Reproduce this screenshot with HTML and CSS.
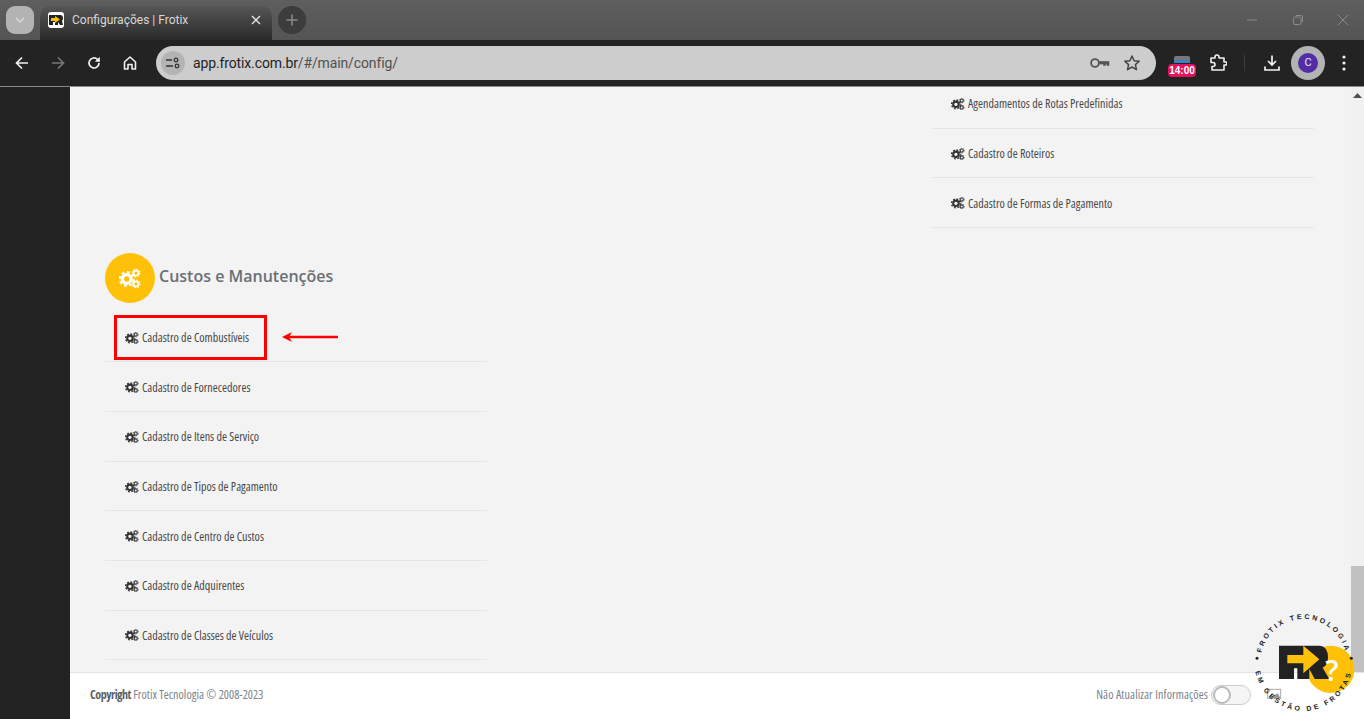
FILE: index.html
```html
<!DOCTYPE html>
<html lang="pt-BR">
<head>
<meta charset="utf-8">
<title>Configurações | Frotix</title>
<link rel="stylesheet" href="styles.css">
</head>
<body>
<svg class="defs" width="0" height="0" aria-hidden="true">
  <defs>
    <g id="cogs">
      <circle cx="5.6" cy="7.4" r="3.2" fill="none" stroke="currentColor" stroke-width="2.4"/>
      <circle cx="5.6" cy="7.4" r="5.1" fill="none" stroke="currentColor" stroke-width="1.6" stroke-dasharray="2.1 1.9"/>
      <circle cx="12.4" cy="3" r="1.8" fill="none" stroke="currentColor" stroke-width="1.2"/>
      <circle cx="12.4" cy="3" r="2.8" fill="none" stroke="currentColor" stroke-width="1" stroke-dasharray="1.1 1.1"/>
      <circle cx="12.4" cy="11" r="1.8" fill="none" stroke="currentColor" stroke-width="1.2"/>
      <circle cx="12.4" cy="11" r="2.8" fill="none" stroke="currentColor" stroke-width="1" stroke-dasharray="1.1 1.1"/>
    </g>
  </defs>
</svg>
<div class="browser">
  <div class="tabstrip">
    <div class="tab-search"><svg width="10" height="6" viewBox="0 0 10 6"><path d="M1 1l4 4 4-4" fill="none" stroke="#dcdcdc" stroke-width="1.4"/></svg></div>
    <div class="tab">
      <span class="favicon"><svg width="14" height="10" viewBox="0 0 14 10"><path d="M0 0h11q3 0 3 3 0 2-1 2.500L14 10h-3L9 7v3H6V7H4v3H0z" fill="#222"/><path d="M2 3h4V1l5 3.500L6 8V6H2z" fill="#ffc107"/></svg></span>
      <span class="tab-title">Configurações | Frotix</span>
      <svg class="tab-close" width="10" height="10" viewBox="0 0 10 10"><path d="M1 1l8 8M9 1l-8 8" stroke="#e4e4e4" stroke-width="1.400"/></svg>
    </div>
    <div class="new-tab"><svg width="12" height="12" viewBox="0 0 12 12"><path d="M6 0.500v11M0.500 6h11" stroke="#8a8a8a" stroke-width="1.500"/></svg></div>
    <div class="window-controls">
      <svg width="12" height="12" viewBox="0 0 12 12"><path d="M1 6h10" stroke="#8b8b8b" stroke-width="1"/></svg>
      <svg width="12" height="12" viewBox="0 0 12 12"><rect x="1.500" y="3" width="7.500" height="7.500" rx="1.500" fill="none" stroke="#8b8b8b"/><path d="M4 1.500h5a1.500 1.500 0 0 1 1.500 1.500v5" fill="none" stroke="#8b8b8b"/></svg>
      <svg width="12" height="12" viewBox="0 0 12 12"><path d="M1 1l10 10M11 1L1 11" stroke="#8b8b8b" stroke-width="1"/></svg>
    </div>
  </div>
  <div class="toolbar">
    <svg class="tb-icon" width="16" height="16" viewBox="0 0 16 16"><path d="M14 8H2.500M8 2.500L2.500 8 8 13.500" fill="none" stroke="#f1f1f1" stroke-width="1.700"/></svg>
    <svg class="tb-icon" width="16" height="16" viewBox="0 0 16 16"><path d="M2 8h11.500M8 2.500L13.500 8 8 13.500" fill="none" stroke="#777" stroke-width="1.700"/></svg>
    <svg class="tb-icon" width="16" height="16" viewBox="0 0 16 16"><path d="M13 8a5 5 0 1 1-1.600-3.700L13.500 6.300" fill="none" stroke="#f1f1f1" stroke-width="1.700"/><path d="M13.800 1.800v5h-5z" fill="#f1f1f1"/></svg>
    <svg class="tb-icon" width="16" height="16" viewBox="0 0 16 16"><path d="M2.500 7L8 2l5.500 5v7h-3.500v-4.500h-4V14H2.500z" fill="none" stroke="#f1f1f1" stroke-width="1.600" stroke-linejoin="round"/></svg>
    <div class="omnibox">
      <span class="site-chip"><svg width="14" height="12" viewBox="0 0 14 12"><path d="M0 3h6M0 9h7" stroke="#333" stroke-width="1.400" fill="none"/><circle cx="10" cy="3" r="1.800" fill="none" stroke="#333" stroke-width="1.300"/><circle cx="11" cy="9" r="1.800" fill="none" stroke="#333" stroke-width="1.300"/></svg></span>
      <span class="url"><span class="url-host">app.frotix.com.br</span>/#/main/config/</span>
      <span class="omni-right">
        <svg width="20" height="12" viewBox="0 0 20 12"><circle cx="5" cy="6" r="3.900" fill="none" stroke="#555" stroke-width="1.800"/><path d="M9 4.500h10v4h-2V7h-1.500v1.500h-2V7H9z" fill="#555" stroke="#555" stroke-width="0.600"/></svg>
        <svg width="18" height="18" viewBox="0 0 18 18"><path d="M9 2l2.100 4.700 5.100 .5-3.800 3.400 1.100 5L9 13l-4.500 2.600 1.100-5L1.800 7.200l5.100-.5z" fill="none" stroke="#444" stroke-width="1.500" stroke-linejoin="round"/></svg>
      </span>
    </div>
    <div class="ext-timer">
      <span class="timer-top"></span>
      <span class="timer-badge">14:00</span>
    </div>
    <svg class="ext-puzzle" width="18" height="18" viewBox="0 0 18 18"><path d="M2 4h4V3a2 2 0 0 1 4 0v1h5v4h1.500a1.500 1.500 0 0 1 0 3H15v5H3v-3.500h1a2 2 0 0 0 0-4H2z" fill="none" stroke="#f1f1f1" stroke-width="1.600" stroke-linejoin="round"/></svg>
    <span class="tb-sep"></span>
    <svg class="ext-download" width="18" height="18" viewBox="0 0 18 18"><path d="M9 1.500v9M5 7l4 4 4-4M2 12.500V16h14v-3.500" fill="none" stroke="#f1f1f1" stroke-width="1.700"/></svg>
    <span class="avatar-ring"><span class="avatar">C</span></span>
    <svg class="menu-dots" width="4" height="16" viewBox="0 0 4 16"><circle cx="2" cy="2" r="1.600" fill="#f1f1f1"/><circle cx="2" cy="8" r="1.600" fill="#f1f1f1"/><circle cx="2" cy="14" r="1.600" fill="#f1f1f1"/></svg>
  </div>
</div>

<div class="viewport">
  <aside class="sidebar"></aside>
  <div class="page">
    <main class="content">
      <section class="col col-left">
        <h2 class="section-title">
          <span class="section-badge"><svg width="22" height="19" viewBox="0 0 16 14"><use href="#cogs"/></svg></span>
          <span class="section-name">Custos e Manutenções</span>
        </h2>
        <ul class="menu">
          <li class="menu-item"><svg class="cog" width="14" height="12" viewBox="0 0 16 14"><use href="#cogs"/></svg>Cadastro de Combustíveis</li>
          <li class="menu-item"><svg class="cog" width="14" height="12" viewBox="0 0 16 14"><use href="#cogs"/></svg>Cadastro de Fornecedores</li>
          <li class="menu-item"><svg class="cog" width="14" height="12" viewBox="0 0 16 14"><use href="#cogs"/></svg>Cadastro de Itens de Serviço</li>
          <li class="menu-item"><svg class="cog" width="14" height="12" viewBox="0 0 16 14"><use href="#cogs"/></svg>Cadastro de Tipos de Pagamento</li>
          <li class="menu-item"><svg class="cog" width="14" height="12" viewBox="0 0 16 14"><use href="#cogs"/></svg>Cadastro de Centro de Custos</li>
          <li class="menu-item"><svg class="cog" width="14" height="12" viewBox="0 0 16 14"><use href="#cogs"/></svg>Cadastro de Adquirentes</li>
          <li class="menu-item"><svg class="cog" width="14" height="12" viewBox="0 0 16 14"><use href="#cogs"/></svg>Cadastro de Classes de Veículos</li>
        </ul>
      </section>
      <section class="col"></section>
      <section class="col col-right">
        <ul class="menu">
          <li class="menu-item"><svg class="cog" width="14" height="12" viewBox="0 0 16 14"><use href="#cogs"/></svg>Agendamentos de Rotas Predefinidas</li>
          <li class="menu-item"><svg class="cog" width="14" height="12" viewBox="0 0 16 14"><use href="#cogs"/></svg>Cadastro de Roteiros</li>
          <li class="menu-item"><svg class="cog" width="14" height="12" viewBox="0 0 16 14"><use href="#cogs"/></svg>Cadastro de Formas de Pagamento</li>
        </ul>
      </section>
    </main>
    <footer class="footer">
      <span class="copyright"><b>Copyright</b> Frotix Tecnologia © 2008-2023</span>
      <span class="footer-right">
        <span class="toggle-label">Não Atualizar Informações</span>
        <span class="toggle"><span class="toggle-knob"></span></span>
      </span>
    </footer>
  </div>
  <div class="scrollbar">
    <svg width="9" height="5" viewBox="0 0 9 5"><path d="M0 5l4.500-5L9 5z" fill="#505050"/></svg>
    <span class="scroll-thumb"></span>
    <span class="scroll-foot"></span>
  </div>

  <div class="highlight-box"></div>
  <svg class="arrow" width="58" height="12" viewBox="0 0 58 12"><path d="M6 6h51" stroke="#f00" stroke-width="2.400"/><path d="M1 6l10-5-3 5 3 5z" fill="#f00"/></svg>
  <svg class="seal" width="120" height="119" viewBox="0 0 360 357">
    <defs>
      <path id="ring-top" d="M49.500 186A129 129 0 0 1 307.500 186"/>
      <path id="ring-bottom" d="M31.500 186A147 147 0 0 0 325.500 186"/>
    </defs>
    <rect x="71" y="268" width="39" height="27" fill="#fff" stroke="#aaa" stroke-width="3"/>
    <path d="M72 294l30-14 7 14z" fill="#999"/>
    <circle cx="260" cy="208" r="71" fill="#ffc107"/>
    <path d="M105 137H228Q252 140 252 172Q252 196 236 203L256 237H212L196 207V237H160V205H150V237H105Z" fill="#222"/>
    <path d="M130 165H178V137L226 178L178 220V190H130Z" fill="#ffc107"/>
    <text class="seal-q" x="244" y="244">?</text>
    <circle cx="39" cy="175" r="4.500" fill="#222"/>
    <circle cx="322" cy="175" r="4.500" fill="#222"/>
    <text class="seal-text"><textPath href="#ring-top" startOffset="50%">FROTIX TECNOLOGIA</textPath></text>
    <text class="seal-text seal-text-low"><textPath href="#ring-bottom" startOffset="50%">EM GESTÃO DE FROTAS</textPath></text>
  </svg>
</div>
</body>
</html>
```

FILE: styles.css
```css
* { box-sizing: border-box; }
html, body { margin: 0; height: 100%; overflow: hidden; }
body { width: 1364px; height: 719px; display: flex; flex-direction: column; font-family: "Open Sans", sans-serif; background: #f3f3f3; }
.defs { position: absolute; }

.browser { flex: none; }
.tabstrip { height: 40px; display: flex; align-items: flex-start; background: linear-gradient(#5e5e5e, #545454); padding: 6px 0 0 6px; }
.tab-search { width: 28px; height: 28px; border-radius: 9px; background: #b3b3b3; display: flex; align-items: center; justify-content: center; }
.tab { width: 232px; height: 34px; margin-left: 6px; border-radius: 10px 10px 0 0; background: linear-gradient(#565656, #2a2a2a); display: flex; align-items: center; padding: 0 11px 6px 8px; }
.favicon { width: 16px; height: 16px; border-radius: 3px; background: #fff; display: flex; align-items: center; justify-content: center; }
.tab-title { margin-left: 8px; flex: 1; font: 12px "Roboto", sans-serif; color: #d8d8d8; }
.new-tab { width: 28px; height: 28px; margin-left: 6px; border-radius: 50%; background: #3c3c3c; display: flex; align-items: center; justify-content: center; }
.window-controls { margin-left: auto; margin-top: 8px; width: 118px; padding-right: 15px; display: flex; justify-content: space-between; }

.toolbar { height: 47px; background: #232323; display: flex; align-items: center; padding-left: 14px; border-bottom: 1px solid #8a8a8a; }
.tb-icon { margin-right: 20px; flex: none; }
.tb-icon:nth-child(4) { margin-right: 18px; }
.omnibox { width: 1000px; height: 34px; flex: none; border-radius: 17px; background: #cdcdcd; display: flex; align-items: center; padding: 0 15px 0 5px; }
.site-chip { width: 24px; height: 24px; border-radius: 50%; background: #b4b4b4; display: flex; align-items: center; justify-content: center; }
.url { margin-left: 8px; font: 14px "Roboto", sans-serif; letter-spacing: -0.13px; color: #505050; }
.url-host { color: #1f1f1f; }
.omni-right { margin-left: auto; display: flex; align-items: center; gap: 13px; }
.ext-timer { position: relative; width: 28px; height: 28px; margin-left: 12px; flex: none; }
.timer-top { position: absolute; left: 6px; top: 7px; width: 16px; height: 7px; border-radius: 2px 2px 0 0; background: linear-gradient(#777 60%, #3d7fc4 60%); }
.timer-badge { position: absolute; left: 0; top: 15px; width: 28px; height: 13px; border-radius: 4px; background: #e6115c; color: #fff; font: 700 10px/13px "Liberation Sans", sans-serif; text-align: center; }
.ext-puzzle { margin-left: 13px; flex: none; }
.tb-sep { width: 1px; height: 16px; background: #3c3c3c; margin-left: 17px; flex: none; }
.ext-download { margin-left: 18px; flex: none; }
.avatar-ring { width: 34px; height: 34px; margin-left: 10px; border-radius: 50%; background: #b3b3b3; display: flex; align-items: center; justify-content: center; flex: none; }
.avatar { width: 20px; height: 20px; border-radius: 50%; background: #512da8; color: #e8e8e8; font: 11px/20px "Roboto", sans-serif; text-align: center; }
.menu-dots { margin-left: 17px; flex: none; }

.viewport { position: relative; flex: 1; min-height: 0; display: flex; }
.sidebar { width: 70px; flex: none; background: #222; }
.page { flex: 1; min-width: 0; display: flex; flex-direction: column; background: #f3f3f3; }
.content { flex: 1; min-height: 0; overflow: hidden; display: grid; grid-template-columns: repeat(3, 382px); column-gap: 31.5px; padding-left: 35px; align-content: start; }
.col { min-width: 0; }
.col-left { padding-top: 166px; }
.col-right { margin-top: -7.9px; }
.section-title { margin: 0 0 9.8px; height: 50px; display: flex; align-items: center; gap: 4px; font: 600 16px "Open Sans", sans-serif; color: #6a6f75; }
.section-name { padding-bottom: 4px; }
.section-badge { width: 50px; height: 50px; border-radius: 50%; background: #ffc107; color: #fff; display: flex; align-items: center; justify-content: center; }
.menu { list-style: none; margin: 0; padding: 0; }
.menu-item { height: 49.65px; display: flex; align-items: center; padding: 1px 0 0 20px; border-bottom: 1px solid #e6e6e6; font: 12px "Open Sans", sans-serif; font-stretch: 75%; letter-spacing: 0.03px; color: #484848; }
.col-right .menu-item { padding-left: 19px; }
.cog { color: #333; margin-right: 3px; flex: none; }

.footer { height: 47px; flex: none; background: #fff; border-top: 1px solid #e4e4e4; display: flex; align-items: center; justify-content: space-between; padding: 0 100px 3px 20px; font: 12px "Open Sans", sans-serif; font-stretch: 75%; color: #7a828a; }
.copyright { letter-spacing: 0.07px; }
.copyright b { font-weight: 700; letter-spacing: -0.5px; color: #5a5f66; }
.toggle-label { letter-spacing: 0.13px; }
.footer-right { display: flex; align-items: center; gap: 3px; }
.toggle { width: 40px; height: 20px; border-radius: 10px; border: 1px solid #ccc; background: #f5f5f5; position: relative; }
.toggle-knob { position: absolute; left: 1px; top: 0; width: 18px; height: 18px; border-radius: 50%; background: #fff; border: 2px solid #bbb; }
.scrollbar { width: 13px; flex: none; background: #f1f1f1; position: relative; display: flex; flex-direction: column; align-items: center; padding-top: 6px; }
.scroll-thumb { position: absolute; left: 0; top: 479px; width: 13px; bottom: 47px; background: #c1c1c1; }
.scroll-foot { position: absolute; left: 0; bottom: 0; width: 13px; height: 47px; background: #fff; border-top: 1px solid #e4e4e4; }

.highlight-box { position: absolute; left: 114px; top: 228px; width: 153px; height: 45px; border: 3px solid #f00; }
.arrow { position: absolute; left: 281px; top: 244px; }
.seal { position: absolute; left: 1244px; top: 513px; }
.seal-q { font: 600 88px "Open Sans", sans-serif; fill: #fff; }
.seal-text { font: 700 21px "Liberation Sans", sans-serif; letter-spacing: 7.5px; fill: #222; text-anchor: middle; }
.seal-text-low { letter-spacing: 8px; }
```
